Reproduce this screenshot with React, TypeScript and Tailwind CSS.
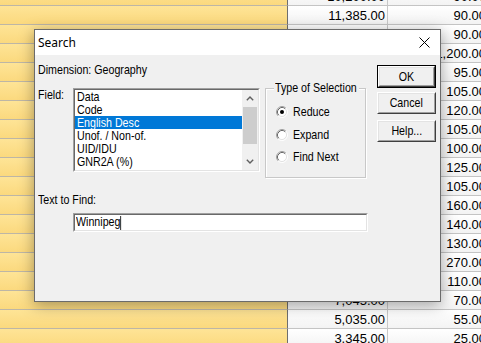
import React from "react";

const col2: (string | null)[] = [
  "10,200.00", "11,385.00", null, null, null, null, null, null, null, null,
  null, null, null, null, null, null, "7,045.00", "5,035.00", "3,345.00",
];
const col3 = [
  "90.00", "90.00", "90.00", "1,200.00", "95.00", "105.00", "120.00", "105.00",
  "100.00", "125.00", "105.00", "160.00", "140.00", "130.00", "270.00", "110.00",
  "70.00", "55.00", "25.00",
];

function N({ children, center }: { children: React.ReactNode; center?: boolean }) {
  return (
    <span className={`inline-block whitespace-nowrap scale-x-[0.82] ${center ? "origin-center" : "origin-left"}`}>
      {children}
    </span>
  );
}

function Radio({ checked }: { checked?: boolean }) {
  return (
    <svg width="12" height="12" viewBox="0 0 12 12" className="shrink-0">
      <circle cx="6" cy="6" r="4.5" fill="#ffffff" />
      <path d="M2.11 9.89 A5.5 5.5 0 0 1 9.89 2.11" fill="none" stroke="#a0a0a0" strokeWidth="1" />
      <path d="M2.82 9.18 A4.5 4.5 0 0 1 9.18 2.82" fill="none" stroke="#696969" strokeWidth="1" />
      <path d="M9.89 2.11 A5.5 5.5 0 0 1 2.11 9.89" fill="none" stroke="#ffffff" strokeWidth="1" />
      <path d="M9.18 2.82 A4.5 4.5 0 0 1 2.82 9.18" fill="none" stroke="#e3e3e3" strokeWidth="1" />
      {checked && <circle cx="6" cy="6" r="2" fill="#000000" />}
    </svg>
  );
}

function Btn({ label, def, h }: { label: string; def?: boolean; h: string }) {
  return (
    <div className={`${h} w-[59px] ${def ? "border border-[#000]" : ""} flex`}>
      <div className="flex-1 border border-t-white border-l-white border-b-[#404040] border-r-[#404040] flex">
        <div className="flex-1 border border-t-[#e3e3e3] border-l-[#e3e3e3] border-b-[#a0a0a0] border-r-[#a0a0a0] bg-[#f0f0f0] flex items-center justify-center text-[13px] leading-[14px] text-black">
          <N center>{label}</N>
        </div>
      </div>
    </div>
  );
}

function Chevron({ up }: { up?: boolean }) {
  return (
    <svg width="8" height="5" viewBox="0 0 8 5">
      <polyline
        points={up ? "0.8,4.2 4,1 7.2,4.2" : "0.8,0.8 4,4 7.2,0.8"}
        fill="none"
        stroke="#606060"
        strokeWidth="1.4"
      />
    </svg>
  );
}

export default function App() {
  const items = ["Data", "Code", "English Desc", "Unof. / Non-of.", "UID/IDU", "GNR2A (%)"];
  return (
    <div className="relative w-[481px] h-[343px] overflow-hidden bg-white font-['Liberation_Sans','Arial',sans-serif]">
      {/* background spreadsheet */}
      <div className="mt-[-13px] flex flex-col w-[500px]">
        {col3.map((v, i) => (
          <div key={i} className="flex h-[19px]">
            <div className="w-[288px] h-full border-b border-r border-b-[#bdb6a6] border-r-[#6e6e6e] bg-gradient-to-b from-[#fee496] to-[#fbd97e]" />
            <div className="w-[100px] h-full border-b border-r border-b-[#c4c4c4] border-r-[#c8c8c8] bg-gradient-to-b from-white to-[#f3f3f3] flex items-center justify-end pr-[2px] pt-[2px] text-[13px] text-black">
              {col2[i] ?? ""}
            </div>
            <div className="w-[101px] h-full border-b border-b-[#c4c4c4] bg-gradient-to-b from-white to-[#f3f3f3] flex items-center justify-end pr-[3px] pt-[2px] text-[13px] text-black">
              {v}
            </div>
          </div>
        ))}
      </div>

      {/* dialog */}
      <div className="absolute left-[34px] top-[29px] w-[407px] h-[273px] border border-[#6b6b6b] bg-[#f0f0f0] shadow-[0_3px_14px_rgba(0,0,0,0.35)] flex flex-col">
        <div className="h-[25px] bg-white flex items-center justify-between pl-[3px] pr-[10px]">
          <span className="font-['Noto_Sans',sans-serif] text-[12px] text-black leading-[16px]">Search</span>
          <svg width="11" height="11" viewBox="0 0 11 11">
            <path d="M0.5 0.5 L10.5 10.5 M10.5 0.5 L0.5 10.5" stroke="#000" strokeWidth="1" />
          </svg>
        </div>
        <div className="flex pl-[3px] text-[13px] leading-[14px] text-black">
          <div className="w-[330px] flex flex-col">
            <div className="mt-[8px] h-[14px]">
              <N>Dimension: Geography</N>
            </div>
            <div className="mt-[11px] flex items-start">
              <div className="w-[35px] h-[14px]">
                <N>Field:</N>
              </div>
              <div className="w-[187px] h-[84px] border border-t-[#a0a0a0] border-l-[#a0a0a0] border-b-white border-r-white flex">
                <div className="flex-1 border border-t-[#696969] border-l-[#696969] border-b-[#e3e3e3] border-r-[#e3e3e3] bg-white flex">
                  <div className="flex-1 flex flex-col">
                    {items.map((it, i) => (
                      <div
                        key={it}
                        className={`h-[13px] leading-[13px] pl-[2px] whitespace-nowrap ${i === 2 ? "bg-[#0078d7] text-white" : "text-black"}`}
                      >
                        <N>{it}</N>
                      </div>
                    ))}
                  </div>
                  <div className="w-[16px] bg-[#f0f0f0] flex flex-col">
                    <div className="h-[17px] flex items-center justify-center">
                      <Chevron up />
                    </div>
                    <div className="h-[37px] mx-[1px] bg-[#cdcdcd]" />
                    <div className="flex-1" />
                    <div className="h-[17px] flex items-center justify-center">
                      <Chevron />
                    </div>
                  </div>
                </div>
              </div>
              <div className="relative ml-[5px] w-[101px] h-[90px] border border-[#c8c8c8] shadow-[inset_1px_1px_0_#ffffff,1px_1px_0_#ffffff] flex flex-col pl-[10px] pt-[12px]">
                <span className="absolute left-[8px] top-[-8px] w-[85px] px-[1px] bg-[#f0f0f0] leading-[14px] whitespace-nowrap">
                  <N>Type of Selection</N>
                </span>
                <div className="h-[22px] flex items-center gap-[5px]">
                  <Radio checked />
                  <N>Reduce</N>
                </div>
                <div className="h-[23px] flex items-center gap-[5px]">
                  <Radio />
                  <N>Expand</N>
                </div>
                <div className="h-[22px] flex items-center gap-[5px]">
                  <Radio />
                  <N>Find Next</N>
                </div>
              </div>
            </div>
            <div className="mt-[15px] h-[14px]">
              <N>Text to Find:</N>
            </div>
            <div className="mt-[6px] ml-[35px] w-[295px] h-[19px] border border-t-[#a0a0a0] border-l-[#a0a0a0] border-b-white border-r-white flex">
              <div className="flex-1 border border-t-[#696969] border-l-[#696969] border-b-[#e3e3e3] border-r-[#e3e3e3] bg-white flex items-center pl-[1px]">
                <N>
                  Winnipeg<span className="inline-block align-middle w-[1.2px] h-[14px] bg-black" />
                </N>
              </div>
            </div>
          </div>
          <div className="ml-[9px] mt-[10px] flex flex-col">
            <Btn label="OK" def h="h-[23px]" />
            <div className="mt-[4px]">
              <Btn label="Cancel" h="h-[22px]" />
            </div>
            <div className="mt-[6px]">
              <Btn label="Help..." h="h-[22px]" />
            </div>
          </div>
        </div>
      </div>
    </div>
  );
}
